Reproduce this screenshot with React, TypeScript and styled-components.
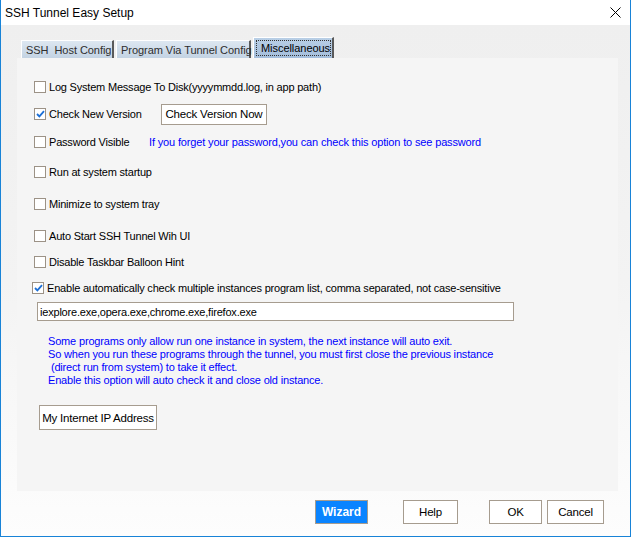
import React from "react";
import styled, { createGlobalStyle } from "styled-components";

const Global = createGlobalStyle`
  html, body { margin: 0; padding: 0; background: #ffffff; }
  body { font-family: "Liberation Sans", Arial, sans-serif; }
  * { box-sizing: border-box; }
`;

const Window = styled.div`
  width: 631px;
  height: 537px;
  border: 1px solid #1883d7;
  border-top: none;
  display: flex;
  flex-direction: column;
  background: #ffffff;
  overflow: hidden;
`;

const TitleBar = styled.div`
  height: 25px;
  flex: none;
  display: flex;
  align-items: center;
  justify-content: space-between;
  padding: 0 9px 0 4px;
  background: #ffffff;
`;

const Title = styled.span`
  font-family: "Liberation Sans", Arial, sans-serif;
  font-size: 12px;
  color: #000;
`;

const Body = styled.div`
  flex: 1;
  display: flex;
  flex-direction: column;
  padding: 12px 12px 0 16px;
  background: linear-gradient(to bottom, #efefef 0%, #f3f3f3 50%, #fdfdfd 100%);
`;

const TabStrip = styled.div`
  display: flex;
  align-items: flex-end;
  height: 21px;
  padding-left: 4px;
`;

const Tab = styled.div<{ $active?: boolean; $w: number }>`
  width: ${(p) => p.$w}px;
  height: ${(p) => (p.$active ? 21 : 18)}px;
  flex: none;
  margin-right: 2px;
  display: flex;
  align-items: center;
  white-space: nowrap;
  padding: ${(p) => (p.$active ? "2px 1px 2px 2px" : "1px 0 0 4px")};
  font-size: 11px;
  letter-spacing: -0.05px;
  color: ${(p) => (p.$active ? "#000" : "#2e2e2e")};
  background: ${(p) =>
    p.$active
      ? "linear-gradient(to bottom, #b9cfe6, #a3bddb)"
      : "linear-gradient(to bottom, #dde7f1, #c3d3e3)"};
  border-top: 1px solid #ffffff;
  border-left: 1px solid #ffffff;
  border-right: 2px solid #5a5a5a;
`;

const Focus = styled.div`
  flex: 1;
  height: 100%;
  border: 1px dotted #333;
  display: flex;
  align-items: center;
  padding-left: 4px;
`;

const Panel = styled.div`
  width: 601px;
  height: 433px;
  background: #f5f5f5;
  display: flex;
  flex-direction: column;
  padding: 0 0 0 17px;
`;

const Row = styled.div<{ $mt: number; $shift?: number }>`
  height: 20px;
  margin-top: ${(p) => p.$mt}px;
  margin-left: ${(p) => p.$shift ?? 0}px;
  display: flex;
  align-items: center;
  font-size: 11px;
  letter-spacing: -0.2px;
  color: #000;
`;

const Box = styled.span`
  width: 12px;
  height: 12px;
  flex: none;
  border: 1px solid #9c9286;
  background: #ffffff;
  margin-right: 3px;
  display: flex;
  align-items: center;
  justify-content: center;
`;

const Label = styled.span<{ $w?: number }>`
  white-space: nowrap;
  flex: none;
  ${(p) => (p.$w ? `width: ${p.$w}px;` : "")}
`;

const Hint = styled.span`
  color: #0000ff;
  font-size: 11px;
  letter-spacing: -0.15px;
  white-space: nowrap;
`;

const Button = styled.button<{ $w: number; $h?: number; $primary?: boolean }>`
  width: ${(p) => p.$w}px;
  height: ${(p) => p.$h ?? 24}px;
  padding: 0;
  flex: none;
  white-space: nowrap;
  border: 1px solid #a69c8f;
  background: ${(p) => (p.$primary ? "#0a84ff" : "#ffffff")};
  color: ${(p) => (p.$primary ? "#ffffff" : "#000000")};
  font-family: "Liberation Sans", Arial, sans-serif;
  font-size: ${(p) => (p.$primary ? 12 : 11.5)}px;
  letter-spacing: ${(p) => (p.$primary ? "0" : "-0.2px")};
  font-weight: ${(p) => (p.$primary ? 700 : 400)};
  display: flex;
  align-items: center;
  justify-content: center;
`;

const Input = styled.div`
  width: 477px;
  height: 19px;
  margin-top: 4px;
  margin-left: 3px;
  border: 1px solid #a69c8f;
  background: #ffffff;
  font-size: 11px;
  letter-spacing: -0.2px;
  display: flex;
  align-items: center;
  padding-left: 2px;
`;

const Note = styled.div`
  margin-top: 14px;
  padding-left: 14px;
  color: #0000ff;
  font-size: 11px;
  letter-spacing: -0.17px;
  line-height: 13px;
  white-space: pre;
`;

const IPWrap = styled.div`
  margin-top: 18px;
  padding-left: 5px;
`;

const Footer = styled.div`
  display: flex;
  align-items: center;
  height: 24px;
  margin-top: 9px;
  padding-left: 298px;
`;

const Spacer = styled.span<{ $w: number }>`
  width: ${(p) => p.$w}px;
  flex: none;
`;

const Check = ({ checked }: { checked?: boolean }) => (
  <Box>
    {checked && (
      <svg width="9" height="8" viewBox="0 0 9 8">
        <path d="M1 4 L3.4 6.4 L8 1.2" stroke="#1c6fd6" strokeWidth="1.8" fill="none" />
      </svg>
    )}
  </Box>
);

export default function App() {
  return (
    <>
      <Global />
      <Window>
        <TitleBar>
          <Title>SSH Tunnel Easy Setup</Title>
          <svg width="11" height="11" viewBox="0 0 11 11">
            <path d="M0.5 0.5 L10.5 10.5 M10.5 0.5 L0.5 10.5" stroke="#000" strokeWidth="1" />
          </svg>
        </TitleBar>
        <Body>
          <TabStrip>
            <Tab $w={93}>SSH&nbsp; Host Config</Tab>
            <Tab $w={135}>Program Via Tunnel Config</Tab>
            <Tab $w={81} $active>
              <Focus>Miscellaneous</Focus>
            </Tab>
          </TabStrip>
          <Panel>
            <Row $mt={19}>
              <Check />
              <Label>Log System Message To Disk(yyyymmdd.log, in app path)</Label>
            </Row>
            <Row $mt={7}>
              <Check checked />
              <Label $w={112}>Check New Version</Label>
              <Button $w={106} $h={21}>Check Version Now</Button>
            </Row>
            <Row $mt={8}>
              <Check />
              <Label $w={100}>Password Visible</Label>
              <Hint>If you forget your password,you can check this option to see password</Hint>
            </Row>
            <Row $mt={10}>
              <Check />
              <Label>Run at system startup</Label>
            </Row>
            <Row $mt={12}>
              <Check />
              <Label>Minimize to system tray</Label>
            </Row>
            <Row $mt={12}>
              <Check />
              <Label>Auto Start SSH Tunnel Wih UI</Label>
            </Row>
            <Row $mt={6}>
              <Check />
              <Label>Disable Taskbar Balloon Hint</Label>
            </Row>
            <Row $mt={6} $shift={-2}>
              <Check checked />
              <Label>Enable automatically check multiple instances program list, comma separated, not case-sensitive</Label>
            </Row>
            <Input>iexplore.exe,opera.exe,chrome.exe,firefox.exe</Input>
            <Note>
              {"Some programs only allow run one instance in system, the next instance will auto exit.\nSo when you run these programs through the tunnel, you must first close the previous instance\n (direct run from system) to take it effect.\nEnable this option will auto check it and close old instance."}
            </Note>
            <IPWrap>
              <Button $w={118} $h={25}>My Internet IP Address</Button>
            </IPWrap>
          </Panel>
          <Footer>
            <Button $w={53} $primary>Wizard</Button>
            <Spacer $w={35} />
            <Button $w={55}>Help</Button>
            <Spacer $w={31} />
            <Button $w={53}>OK</Button>
            <Spacer $w={5} />
            <Button $w={57}>Cancel</Button>
          </Footer>
        </Body>
      </Window>
    </>
  );
}
